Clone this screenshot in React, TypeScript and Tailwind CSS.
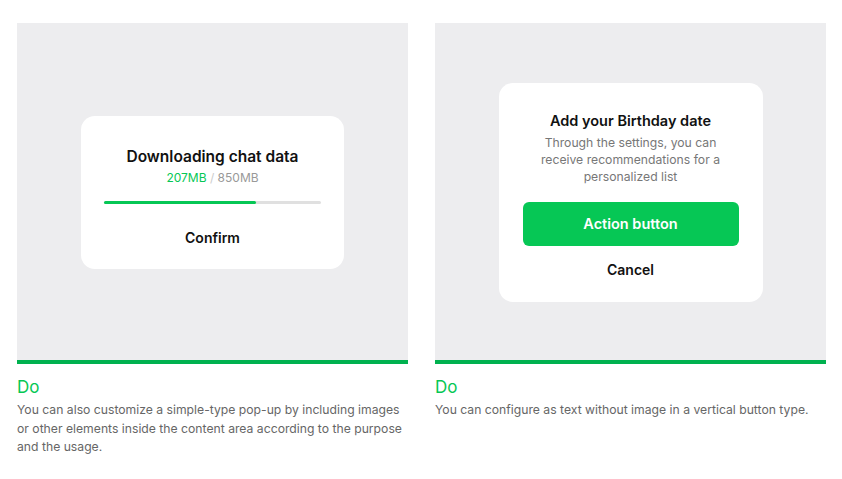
const font = { fontFamily: 'Inter, "Noto Sans", sans-serif' };

function Panel({ children }: { children: React.ReactNode }) {
  return (
    <div className="flex h-[341px] flex-col border-b-4 border-[#00b14f] bg-[#ededef]">
      <div className="flex flex-1 items-center justify-center">{children}</div>
    </div>
  );
}

function DoNote({ text }: { text: string }) {
  return (
    <div className="pt-[12px]">
      <h3 className="text-[17px] leading-[22px] text-[#06c755]">Do</h3>
      <p className="mt-[3px] text-[12.2px] leading-[18.5px] text-[#666]">{text}</p>
    </div>
  );
}

export default function App() {
  return (
    <div className="min-h-[479px] bg-white px-[17px] pt-[23px]" style={font}>
      <div className="grid grid-cols-[391px_391px] gap-[27px]">
        <div>
          <Panel>
            <div className="mt-[2px] flex h-[153px] w-[263px] flex-col items-center rounded-[14px] bg-white px-[23px] pt-[31px]">
              <p className="text-[15.5px] font-semibold leading-[20px] text-[#111]">Downloading chat data</p>
              <p className="mt-[2px] text-[12px] leading-[18px]">
                <span className="text-[#06c755]">207MB</span>
                <span className="text-[#ccc]"> / </span>
                <span className="text-[#999]">850MB</span>
              </p>
              <div className="mt-[14px] h-[3px] w-full rounded-full bg-[#e0e0e0]">
                <div className="h-full w-[70%] rounded-full bg-[#06c755]" />
              </div>
              <p className="mt-[25px] text-[14px] font-semibold leading-[18px] text-[#111]">Confirm</p>
            </div>
          </Panel>
          <DoNote text="You can also customize a simple-type pop-up by including images or other elements inside the content area according to the purpose and the usage." />
        </div>
        <div>
          <Panel>
            <div className="mt-[2px] flex h-[219px] w-[264px] flex-col items-center rounded-[14px] bg-white px-[24px] pt-[28px]">
              <p className="text-[14.5px] font-semibold leading-[20px] text-[#111]">Add your Birthday date</p>
              <p className="mt-[3px] text-center text-[12.2px] leading-[17px] text-[#777]">
                Through the settings, you can receive recommendations for a personalized list
              </p>
              <button className="mt-[17px] h-[44px] w-full rounded-[6px] bg-[#06c755] text-[14.5px] font-semibold text-white">
                Action button
              </button>
              <p className="mt-[15px] text-[14px] font-semibold leading-[18px] text-[#111]">Cancel</p>
            </div>
          </Panel>
          <DoNote text="You can configure as text without image in a vertical button type." />
        </div>
      </div>
    </div>
  );
}
